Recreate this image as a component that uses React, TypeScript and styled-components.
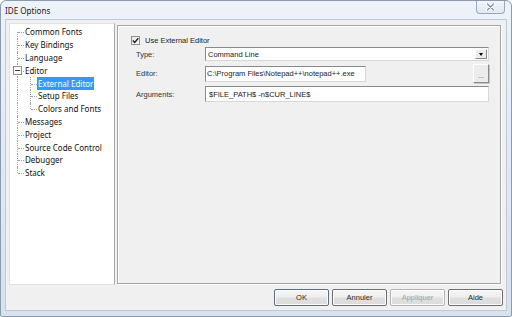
import React from 'react';
import styled, { createGlobalStyle, css } from 'styled-components';

const Global = createGlobalStyle`
  html, body { margin: 0; padding: 0; background: #ffffff; }
  body { width: 512px; height: 317px; overflow: hidden; }
  * { box-sizing: border-box; }
`;

const Window = styled.div`
  width: 512px;
  height: 317px;
  border: 1px solid #8a9bb0;
  border-radius: 6px 6px 2px 2px;
  background: linear-gradient(180deg, #eef3f9 0%, #e1e9f3 45%, #d8e2ee 100%);
  display: flex;
  flex-direction: column;
  padding: 0 4px 5px 4px;
`;

const TitleBar = styled.div`
  height: 18px;
  display: flex;
  align-items: flex-start;
  justify-content: space-between;
`;

const Title = styled.span`
  font-family: "Noto Sans", sans-serif;
  font-size: 8.1px;
  line-height: 19px;
  color: #1b1b1b;
`;

const CloseButton = styled.div`
  width: 29px;
  height: 13px;
  margin-right: 2px;
  border: 1px solid #9aa8ba;
  border-top: none;
  border-radius: 0 0 4px 4px;
  background: linear-gradient(180deg, #f2f6fb 0%, #e0e8f2 100%);
  display: flex;
  align-items: center;
  justify-content: center;
`;

const Client = styled.div`
  flex: 1;
  border: 1px solid #bfcad7;
  background: #f0f0f0;
  display: flex;
  flex-direction: column;
`;

const Main = styled.div`
  display: flex;
  align-items: flex-start;
  gap: 2px;
  padding: 3px 5px 0 3px;
`;

const Tree = styled.div`
  width: 106px;
  height: 262px;
  background: #ffffff;
  border: 1px solid #e2e2e2;
  border-right-color: #a9a9a9;
  padding: 2px 0 0 1px;
  font-family: "Noto Sans", sans-serif;
  font-size: 8px;
  color: #111;
`;

const TreeRow = styled.div`
  height: 12.8px;
  display: flex;
  align-items: stretch;
`;

type GuideKind = 'first' | 'tee' | 'elbow' | 'pass';

const Guide = styled.span<{ $kind: GuideKind }>`
  position: relative;
  width: 13px;
  flex: none;
  display: flex;
  align-items: center;
  &::before {
    content: '';
    position: absolute;
    left: 6px;
    width: 0;
    border-left: 1px dotted #a0a0a0;
    ${({ $kind }) =>
      $kind === 'first'
        ? css`top: 50%; bottom: 0;`
        : $kind === 'elbow'
        ? css`top: 0; height: 50%;`
        : css`top: 0; bottom: 0;`}
  }
  ${({ $kind }) =>
    $kind !== 'pass' &&
    css`
      &::after {
        content: '';
        position: absolute;
        left: 7px;
        width: 6px;
        top: 50%;
        border-top: 1px dotted #a0a0a0;
      }
    `}
`;

const Expander = styled.span`
  position: relative;
  z-index: 1;
  width: 9px;
  height: 9px;
  margin-left: 2px;
  border: 1px solid #919191;
  background: #fff;
  display: flex;
  align-items: center;
  justify-content: center;
  &::before {
    content: '';
    width: 5px;
    height: 1px;
    background: #3b3b3b;
  }
`;

const TreeLabel = styled.span<{ $selected?: boolean }>`
  display: flex;
  align-items: center;
  padding: 0 1px;
  white-space: nowrap;
  line-height: 12px;
  ${({ $selected }) =>
    $selected &&
    css`
      background: #3399ff;
      color: #ffffff;
    `}
`;

const GroupBox = styled.div`
  flex: 1;
  height: 259px;
  margin-top: 2px;
  border: 1px solid #a6a6a6;
  box-shadow: inset 1px 1px 0 #ffffff, 1px 1px 0 #ffffff;
  padding: 10px 0 0 13px;
  font-family: "Liberation Sans", Arial, sans-serif;
  font-size: 7.5px;
  color: #1a1a1a;
`;

const CheckRow = styled.label`
  display: flex;
  align-items: center;
  gap: 5px;
  height: 9px;
`;

const CheckBox = styled.span`
  width: 9px;
  height: 9px;
  border: 1px solid #8e8f8f;
  background: linear-gradient(135deg, #e6e6e6 0%, #ffffff 100%);
  display: flex;
  align-items: center;
  justify-content: center;
`;

const Fields = styled.div`
  display: grid;
  grid-template-columns: 69px 284px;
  grid-template-rows: 14px 19px 16px;
  row-gap: 3px;
  margin: 2px 0 0 5px;
`;

const FieldLabel = styled.span`
  align-self: center;
  color: #333333;
`;

const Combo = styled.div`
  display: flex;
  align-items: center;
  justify-content: space-between;
  border: 1px solid;
  border-color: #8a8a8a #d8d8d8 #d8d8d8 #8a8a8a;
  background: #fff;
  padding: 0 1px 0 2px;
`;

const DropButton = styled.span`
  width: 12px;
  height: 10px;
  border: 1px solid;
  border-color: #ffffff #8a8a8a #8a8a8a #ffffff;
  background: #ececec;
  display: flex;
  align-items: center;
  justify-content: center;
  &::before {
    content: '';
    border-left: 2.5px solid transparent;
    border-right: 2.5px solid transparent;
    border-top: 3px solid #000;
  }
`;

const FieldRow = styled.div`
  display: flex;
  align-items: center;
  justify-content: space-between;
`;

const TextBox = styled.div<{ $width?: number; $indent?: number }>`
  width: ${({ $width }) => ($width ? `${$width}px` : '100%')};
  height: 16px;
  border: 1px solid;
  border-color: #8a8a8a #d8d8d8 #d8d8d8 #8a8a8a;
  background: #fff;
  padding-left: ${({ $indent }) => $indent ?? 1}px;
  display: flex;
  align-items: center;
  white-space: nowrap;
  overflow: hidden;
`;

const BrowseButton = styled.span`
  width: 16px;
  height: 19px;
  border: 1px solid;
  border-color: #ffffff #8a8a8a #8a8a8a #ffffff;
  box-shadow: 1px 1px 0 #c8c8c8;
  background: #ececec;
  display: flex;
  align-items: center;
  justify-content: center;
  padding-top: 3px;
  font-size: 7px;
  color: #555;
`;

const ButtonBar = styled.div`
  display: flex;
  justify-content: flex-end;
  gap: 3px;
  padding: 4px 3px 0 0;
`;

const DialogButton = styled.button<{ $disabled?: boolean; $default?: boolean }>`
  width: 55px;
  height: 17px;
  padding: 0;
  border: 1px solid ${({ $disabled, $default }) => ($disabled ? '#b3b3b3' : $default ? '#5f6f80' : '#707070')};
  border-radius: 2px;
  background: linear-gradient(180deg, #f6f6f6 0%, #eeeeee 48%, #e0e0e0 52%, #dcdcdc 100%);
  box-shadow: inset 0 0 0 1px #fcfcfc;
  font-family: "Liberation Sans", Arial, sans-serif;
  font-size: 7.5px;
  color: ${({ $disabled }) => ($disabled ? '#a3a3a3' : '#2a2a2a')};
`;

type TreeItem = { label: string; guides: GuideKind[]; expander?: boolean; selected?: boolean };

const treeItems: TreeItem[] = [
  { label: 'Common Fonts', guides: ['first'] },
  { label: 'Key Bindings', guides: ['tee'] },
  { label: 'Language', guides: ['tee'] },
  { label: 'Editor', guides: ['tee'], expander: true },
  { label: 'External Editor', guides: ['pass', 'tee'], selected: true },
  { label: 'Setup Files', guides: ['pass', 'tee'] },
  { label: 'Colors and Fonts', guides: ['pass', 'elbow'] },
  { label: 'Messages', guides: ['tee'] },
  { label: 'Project', guides: ['tee'] },
  { label: 'Source Code Control', guides: ['tee'] },
  { label: 'Debugger', guides: ['tee'] },
  { label: 'Stack', guides: ['elbow'] },
];

export default function App() {
  return (
    <>
      <Global />
      <Window>
        <TitleBar>
          <Title>IDE Options</Title>
          <CloseButton>
            <svg width="9" height="8" viewBox="0 0 9 8">
              <path d="M1.5 1 L7.5 7 M7.5 1 L1.5 7" stroke="#ffffff" strokeWidth="3" strokeLinecap="round" />
              <path d="M1.5 1 L7.5 7 M7.5 1 L1.5 7" stroke="#7d8da2" strokeWidth="1.2" strokeLinecap="round" />
            </svg>
          </CloseButton>
        </TitleBar>
        <Client>
          <Main>
            <Tree>
              {treeItems.map((item) => (
                <TreeRow key={item.label}>
                  {item.guides.map((g, i) => (
                    <Guide key={i} $kind={g}>
                      {item.expander && i === item.guides.length - 1 && <Expander />}
                    </Guide>
                  ))}
                  <TreeLabel $selected={item.selected}>{item.label}</TreeLabel>
                </TreeRow>
              ))}
            </Tree>
            <GroupBox>
              <CheckRow>
                <CheckBox>
                  <svg width="7" height="7" viewBox="0 0 7 7">
                    <path d="M0.8 3.4 L2.7 5.4 L6.3 1.2" stroke="#1f1f1f" strokeWidth="1.4" fill="none" />
                  </svg>
                </CheckBox>
                <span>Use External Editor</span>
              </CheckRow>
              <Fields>
                <FieldLabel>Type:</FieldLabel>
                <Combo>
                  <span>Command Line</span>
                  <DropButton />
                </Combo>
                <FieldLabel>Editor:</FieldLabel>
                <FieldRow>
                  <TextBox $width={161}>C:\Program Files\Notepad++\notepad++.exe</TextBox>
                  <BrowseButton>...</BrowseButton>
                </FieldRow>
                <FieldLabel>Arguments:</FieldLabel>
                <TextBox $indent={3}>$FILE_PATH$ -n$CUR_LINE$</TextBox>
              </Fields>
            </GroupBox>
          </Main>
          <ButtonBar>
            <DialogButton $default>OK</DialogButton>
            <DialogButton>Annuler</DialogButton>
            <DialogButton $disabled>Appliquer</DialogButton>
            <DialogButton>Aide</DialogButton>
          </ButtonBar>
        </Client>
      </Window>
    </>
  );
}
